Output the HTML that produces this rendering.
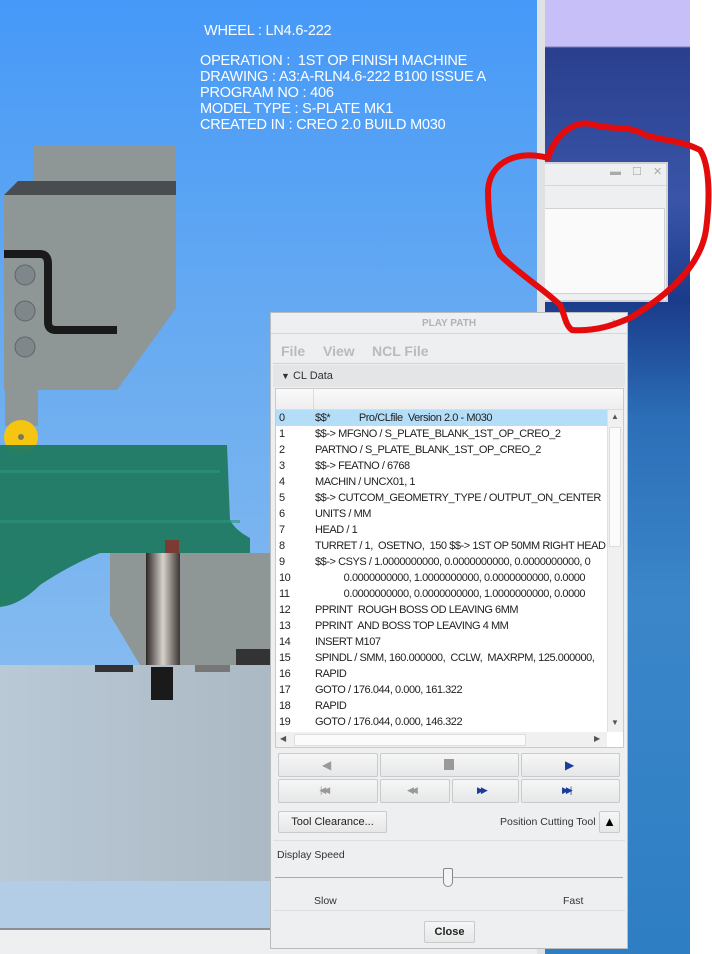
<!DOCTYPE html>
<html><head><meta charset="utf-8">
<style>
*{margin:0;padding:0;box-sizing:border-box}
body{width:712px;height:954px;overflow:hidden;position:relative;font-family:"Liberation Sans",Arial,sans-serif;background:#fff}
.a{position:absolute}
.vt{color:#fff;font-size:14.5px;line-height:16px;letter-spacing:-0.2px}
.dlg{left:270px;top:312px;width:358px;height:637px;background:#eeeff0;border:1px solid #b9bcbf}
.row{position:absolute;left:0;height:16px;font-size:11px;line-height:16px;color:#222;white-space:nowrap;width:331px;overflow:hidden;letter-spacing:-0.45px}
.row span{position:absolute;left:3px}
.row b{font-weight:normal;position:absolute;left:39px}
.btn{position:absolute;background:linear-gradient(#f6f6f6,#e6e7e8);border:1px solid #c8cacc;border-radius:2px}
</style></head><body>
<div class="a" style="left:0;top:0;width:537px;height:930px;background:linear-gradient(#4699f8,#6eaef0 400px,#84baf0 660px)"></div>
<div class="a" style="left:537px;top:0;width:8px;height:954px;background:#dfe1e3"></div>
<div class="a" style="left:545px;top:0;width:145px;height:954px;background:linear-gradient(#c7bff7 0,#c7bff7 46px,#2a3f8e 48px,#3a55a8 200px,#1a3b8a 300px,#2c6fb8 420px,#3b86c9 600px,#2e7ec4 954px)"></div>
<div class="a" style="left:690px;top:0;width:22px;height:954px;background:#fff"></div>
<div class="a" style="left:545px;top:162px;width:123px;height:140px;background:#eeeff0;border:2px solid #cfd1d3;border-left:none"></div>
<div class="a" style="left:545px;top:185px;width:121px;height:1px;background:#d5d7d9"></div>
<div class="a" style="left:545px;top:208px;width:120px;height:86px;background:#fafafa;border:1px solid #cfd1d3;border-left:none"></div>
<div class="a" style="left:610px;top:165px;font-size:11px;color:#aaa;letter-spacing:4px">▬ ☐ ✕</div>
<div class="a vt" style="left:204px;top:23px">WHEEL : LN4.6-222</div>
<div class="a vt" style="left:200px;top:53px">OPERATION :&nbsp; 1ST OP FINISH MACHINE<br>DRAWING : A3:A-RLN4.6-222 B100 ISSUE A<br>PROGRAM NO : 406<br>MODEL TYPE : S-PLATE MK1<br>CREATED IN : CREO 2.0 BUILD M030</div>
<svg class="a" style="left:0;top:0" width="537" height="930">
<rect x="33" y="146" width="143" height="36" fill="#8e9696"/>
<polygon points="4,195 18,181 176,181 176,195" fill="#4a4d4f"/>
<polygon points="4,195 176,195 176,308 117,390 4,390" fill="#8e9696"/>
<path d="M4,254 H40 Q48,254 48,264 V322 Q48,330 56,330 H117" stroke="#1a1a1a" stroke-width="8" fill="none"/>
<circle cx="25" cy="275" r="10" fill="#7f878b" stroke="#5d6569"/>
<circle cx="25" cy="311" r="10" fill="#7f878b" stroke="#5d6569"/>
<circle cx="25" cy="347" r="10" fill="#7f878b" stroke="#5d6569"/>
<rect x="5" y="368" width="33" height="58" fill="#8e9696"/>
<circle cx="21" cy="437" r="17" fill="#f6c512"/>
<circle cx="21" cy="437" r="3" fill="#7a7a5a"/>
<polygon points="110,553 270,553 270,665 140,665 110,615" fill="#8e9696"/>
<path d="M0,445 H227 L230,520 Q235,530 250,538 V553 H100 Q70,565 40,585 Q20,605 0,607 Z" fill="#1f7a60" opacity="0.95"/>
<rect x="0" y="470" width="220" height="3" fill="#2e9478" opacity=".6"/>
<rect x="0" y="520" width="240" height="3" fill="#2e9478" opacity=".6"/>
<defs><linearGradient id="cy" x1="0" x2="1"><stop offset="0" stop-color="#2b2725"/><stop offset=".5" stop-color="#d8d2cc"/><stop offset="1" stop-color="#3a3532"/></linearGradient>
<linearGradient id="pl" x1="0" x2="1"><stop offset="0" stop-color="#b9c9d6"/><stop offset="1" stop-color="#9ea9b2"/></linearGradient></defs>
<rect x="146" y="553" width="34" height="112" fill="url(#cy)"/>
<rect x="165" y="540" width="14" height="13" fill="#a02020" opacity=".7"/>
<rect x="236" y="649" width="34" height="16" fill="#333"/>
<rect x="0" y="665" width="537" height="216" fill="url(#pl)"/>
<rect x="95" y="665" width="38" height="7" fill="#333"/>
<rect x="195" y="665" width="35" height="7" fill="#777"/>
<rect x="151" y="667" width="22" height="33" fill="#1a1a1a"/>
<rect x="0" y="881" width="537" height="47" fill="#b4cde6"/>
<rect x="0" y="928" width="537" height="2" fill="#8a8f95"/>
</svg>
<div class="a" style="left:0;top:930px;width:537px;height:24px;background:#eeeff0"></div>
<div class="a dlg">
 <div class="a" style="left:0;top:0;width:356px;height:21px;border-bottom:1px solid #d5d7d9;text-align:center;font-size:10px;line-height:22px;color:#b0b3b6;font-weight:bold">PLAY PATH</div>
 <div class="a" style="left:340px;top:3px;font-size:12px;color:#b0b3b6">✕</div>
 <div class="a" style="left:2px;top:22px;width:352px;height:29px;border-bottom:1px solid #d0d2d4;font-size:14px;line-height:32px;color:#b8bbbe;font-weight:bold">
  <span class="a" style="left:8px">File</span><span class="a" style="left:50px">View</span><span class="a" style="left:99px">NCL File</span></div>
 <div class="a" style="left:2px;top:52px;width:352px;height:22px;background:#e4e5e6;font-size:11px;line-height:22px;color:#333;padding-left:8px"><span style="font-size:9px">▼</span> CL Data</div>
 <div class="a" style="left:4px;top:75px;width:349px;height:360px;background:#fff;border:1px solid #c8cacc">
  <div class="a" style="left:0;top:0;width:347px;height:21px;background:linear-gradient(#fafafa,#eeeeee);border-bottom:1px solid #ddd"></div>
  <div class="a" style="left:37px;top:0;width:1px;height:21px;background:#ddd"></div>
  <div style="position:absolute;left:0;top:21px">
   <div class="row" style="top:0;background:#b4def8"><span>0</span><b>$$*&nbsp;&nbsp;&nbsp;&nbsp;&nbsp;&nbsp;&nbsp;&nbsp;&nbsp;&nbsp; Pro/CLfile&nbsp; Version 2.0 - M030</b></div>
   <div class="row" style="top:16px"><span>1</span><b>$$-&gt; MFGNO / S_PLATE_BLANK_1ST_OP_CREO_2</b></div>
   <div class="row" style="top:32px"><span>2</span><b>PARTNO / S_PLATE_BLANK_1ST_OP_CREO_2</b></div>
   <div class="row" style="top:48px"><span>3</span><b>$$-&gt; FEATNO / 6768</b></div>
   <div class="row" style="top:64px"><span>4</span><b>MACHIN / UNCX01, 1</b></div>
   <div class="row" style="top:80px"><span>5</span><b>$$-&gt; CUTCOM_GEOMETRY_TYPE / OUTPUT_ON_CENTER</b></div>
   <div class="row" style="top:96px"><span>6</span><b>UNITS / MM</b></div>
   <div class="row" style="top:112px"><span>7</span><b>HEAD / 1</b></div>
   <div class="row" style="top:128px"><span>8</span><b>TURRET / 1,&nbsp; OSETNO,&nbsp; 150 $$-&gt; 1ST OP 50MM RIGHT HEAD</b></div>
   <div class="row" style="top:144px"><span>9</span><b>$$-&gt; CSYS / 1.0000000000, 0.0000000000, 0.0000000000, 0</b></div>
   <div class="row" style="top:160px"><span>10</span><b>&nbsp;&nbsp;&nbsp;&nbsp;&nbsp;&nbsp;&nbsp;&nbsp;&nbsp;&nbsp; 0.0000000000, 1.0000000000, 0.0000000000, 0.0000</b></div>
   <div class="row" style="top:176px"><span>11</span><b>&nbsp;&nbsp;&nbsp;&nbsp;&nbsp;&nbsp;&nbsp;&nbsp;&nbsp;&nbsp; 0.0000000000, 0.0000000000, 1.0000000000, 0.0000</b></div>
   <div class="row" style="top:192px"><span>12</span><b>PPRINT&nbsp; ROUGH BOSS OD LEAVING 6MM</b></div>
   <div class="row" style="top:208px"><span>13</span><b>PPRINT&nbsp; AND BOSS TOP LEAVING 4 MM</b></div>
   <div class="row" style="top:224px"><span>14</span><b>INSERT M107</b></div>
   <div class="row" style="top:240px"><span>15</span><b>SPINDL / SMM, 160.000000,&nbsp; CCLW,&nbsp; MAXRPM, 125.000000,</b></div>
   <div class="row" style="top:256px"><span>16</span><b>RAPID</b></div>
   <div class="row" style="top:272px"><span>17</span><b>GOTO / 176.044, 0.000, 161.322</b></div>
   <div class="row" style="top:288px"><span>18</span><b>RAPID</b></div>
   <div class="row" style="top:304px"><span>19</span><b>GOTO / 176.044, 0.000, 146.322</b></div>
  </div>
  <div class="a" style="left:331px;top:21px;width:16px;height:322px;background:#f0f0f0;border-left:1px solid #e0e0e0"></div>
  <div class="a" style="left:335px;top:23px;font-size:8px;color:#555">▲</div>
  <div class="a" style="left:335px;top:329px;font-size:8px;color:#555">▼</div>
  <div class="a" style="left:333px;top:38px;width:12px;height:120px;background:#fbfbfb;border:1px solid #ddd"></div>
  <div class="a" style="left:0;top:343px;width:331px;height:15px;background:#f0f0f0"></div>
  <div class="a" style="left:18px;top:345px;width:232px;height:12px;background:#fbfbfb;border:1px solid #ddd"></div>
  <div class="a" style="left:4px;top:345px;font-size:8px;color:#555">◀</div>
  <div class="a" style="left:318px;top:345px;font-size:8px;color:#555">▶</div>
 </div>
 <div class="btn" style="left:7px;top:440px;width:100px;height:24px"></div>
 <div class="btn" style="left:109px;top:440px;width:139px;height:24px"></div>
 <div class="btn" style="left:250px;top:440px;width:99px;height:24px"></div>
 <div class="btn" style="left:7px;top:466px;width:100px;height:24px"></div>
 <div class="btn" style="left:109px;top:466px;width:70px;height:24px"></div>
 <div class="btn" style="left:181px;top:466px;width:67px;height:24px"></div>
 <div class="btn" style="left:250px;top:466px;width:99px;height:24px"></div>
 <div class="a" style="left:51px;top:445px;font-size:12px;color:#999">◀</div>
 <div class="a" style="left:173px;top:446px;width:10px;height:11px;background:#999"></div>
 <div class="a" style="left:294px;top:445px;font-size:12px;color:#1a3d9a">▶</div>
 <div class="a" style="left:49px;top:472px;font-size:9px;color:#999;letter-spacing:-3px">|◀◀</div>
 <div class="a" style="left:136px;top:472px;font-size:9px;color:#999;letter-spacing:-3px">◀◀</div>
 <div class="a" style="left:206px;top:472px;font-size:9px;color:#1a3d9a;letter-spacing:-3px">▶▶</div>
 <div class="a" style="left:291px;top:472px;font-size:9px;color:#1a3d9a;letter-spacing:-3px">▶▶|</div>
 <div class="btn" style="left:7px;top:498px;width:109px;height:22px;font-size:11px;line-height:20px;text-align:center;color:#222">Tool Clearance...</div>
 <div class="a" style="left:229px;top:503px;font-size:10.5px;color:#333">Position Cutting Tool</div>
 <div class="btn" style="left:328px;top:498px;width:21px;height:22px;font-size:13px;text-align:center;line-height:20px">&#9650;</div>
 <div class="a" style="left:2px;top:527px;width:352px;height:1px;background:#dcdedf"></div>
 <div class="a" style="left:6px;top:536px;font-size:10.5px;color:#333">Display Speed</div>
 <div class="a" style="left:4px;top:564px;width:348px;height:1px;background:#aaa"></div>
 <div class="a" style="left:172px;top:555px;width:10px;height:19px;background:#f4f4f4;border:1px solid #888;border-radius:2px 2px 5px 5px"></div>
 <div class="a" style="left:43px;top:582px;font-size:10.5px;color:#333">Slow</div>
 <div class="a" style="left:292px;top:582px;font-size:10.5px;color:#333">Fast</div>
 <div class="a" style="left:2px;top:597px;width:352px;height:1px;background:#dcdedf"></div>
 <div class="btn" style="left:153px;top:608px;width:51px;height:22px;font-size:11px;line-height:20px;text-align:center;color:#222;font-weight:bold">Close</div>
</div>
<svg class="a" style="left:0;top:0" width="712" height="954">
<path d="M548,158 C520,150 490,160 488,190 C488,220 492,240 500,255 C520,275 545,290 560,305 C565,315 565,325 572,330 C600,332 620,322 630,318 C660,300 700,270 706,230 C710,200 710,165 700,150 C680,140 660,140 645,135 C630,125 610,130 595,125 C575,118 555,135 548,158" stroke="#e30b0b" stroke-width="6" fill="none" stroke-linecap="round"/>
</svg>
</body></html>
